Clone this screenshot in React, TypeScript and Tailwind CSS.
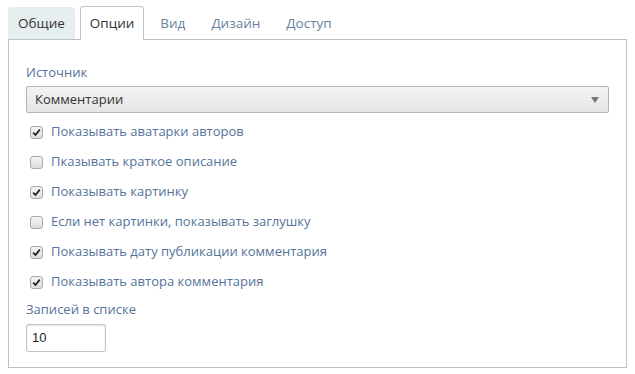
import { useState } from "react";

const tabs = ["Общие", "Опции", "Вид", "Дизайн", "Доступ"];

const options = [
  { label: "Показывать аватарки авторов", checked: true },
  { label: "Пказывать краткое описание", checked: false },
  { label: "Показывать картинку", checked: true },
  { label: "Если нет картинки, показывать заглушку", checked: false },
  { label: "Показывать дату публикации комментария", checked: true },
  { label: "Показывать автора комментария", checked: true },
];

function Check({ checked }: { checked: boolean }) {
  return (
    <span className="w-[13px] h-[13px] rounded-[3px] border border-[#a9a9a9] bg-gradient-to-b from-[#f4f4f4] to-[#dedede] flex items-center justify-center shrink-0">
      {checked && (
        <svg width="9" height="9" viewBox="0 0 9 9">
          <path d="M1.2 4.6 L3.5 7 L7.8 1.6" fill="none" stroke="#222" strokeWidth="1.8" />
        </svg>
      )}
    </span>
  );
}

export default function App() {
  const [active] = useState(1);
  return (
    <div className="w-[635px] h-[374px] bg-white px-2 pt-[6px] font-['Open_Sans',sans-serif] text-[13px]">
      <div className="flex items-end h-[34px] border-b border-[#b8c2c8] text-[13.5px]">
        {tabs.map((t, i) => (
          <div
            key={t}
            className={
              i === active
                ? "h-[34px] px-[9px] mr-[3px] -mb-px bg-white border border-[#b8c2c8] border-b-white rounded-t-[4px] flex items-center text-[#333]"
                : i === 0
                  ? "h-[32px] px-[10px] mr-[5px] bg-[#e6eef0] rounded-t-[3px] flex items-center text-[#333]"
                  : "h-[32px] px-[13px] flex items-center text-[#6a82a0]"
            }
          >
            {t}
          </div>
        ))}
      </div>
      <div className="h-[328px] border border-t-0 border-[#b8c2c8] px-[17px] pt-[23px]">
        <div className="text-[#55739a] leading-[18px]">Источник</div>
        <div className="mt-[5px] h-[27px] rounded-[2px] border border-[#b5b5b5] bg-gradient-to-b from-[#f3f3f3] to-[#e6e6e6] flex items-center justify-between pl-[8px] pr-[9px] text-[#333]">
          <span>Комментарии</span>
          <svg width="8" height="6" viewBox="0 0 8 6">
            <path d="M0 0 H8 L4 6 Z" fill="#777" />
          </svg>
        </div>
        <div className="mt-[4px] flex flex-col">
          {options.map((o) => (
            <label key={o.label} className="h-[30px] flex items-center gap-[8px] pl-[4px] text-[#55739a]">
              <Check checked={o.checked} />
              <span>{o.label}</span>
            </label>
          ))}
        </div>
        <div className="mt-[3px] text-[#55739a] leading-[18px]">Записей в списке</div>
        <div className="mt-[6px] w-[80px] h-[28px] border border-[#c4c4c4] rounded-[2px] shadow-[inset_0_1px_2px_rgba(0,0,0,0.12)] flex items-center pl-[5px] font-['Liberation_Sans',sans-serif] text-[13px] text-[#222]">
          10
        </div>
      </div>
    </div>
  );
}
